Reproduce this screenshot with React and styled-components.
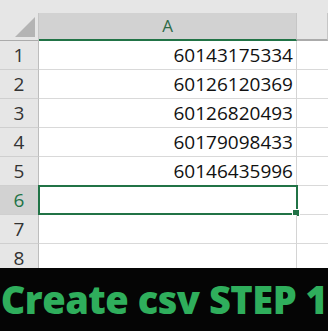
import React from 'react';
import styled, { createGlobalStyle } from 'styled-components';

const GlobalStyle = createGlobalStyle`
  html, body {
    margin: 0;
    padding: 0;
    background: #ffffff;
  }
  body {
    font-family: 'Open Sans', 'Noto Sans', sans-serif;
  }
`;

const Page = styled.div`
  width: 328px;
  height: 331px;
  display: flex;
  flex-direction: column;
  overflow: hidden;
`;

const Sheet = styled.div`
  height: 268px;
  overflow: hidden;
  display: flex;
  flex-direction: column;
`;

const TopStrip = styled.div`
  height: 13px;
  background: #e6e6e6;
  flex: none;
`;

const HeaderRow = styled.div`
  display: grid;
  grid-template-columns: 39px 258px 1fr;
  height: 28px;
  flex: none;
`;

const Corner = styled.div`
  background: #e6e6e6;
  border-right: 1px solid #c6c6c6;
  border-bottom: 1px solid #ababab;
  display: flex;
  align-items: flex-end;
  justify-content: flex-end;
  padding: 0 3px 3px 0;
`;

const ColHeader = styled.div`
  background: ${(p) => (p.$active ? '#d2d2d2' : '#e6e6e6')};
  border-bottom: 2px solid ${(p) => (p.$active ? '#217346' : '#ababab')};
  border-right: 1px solid #c6c6c6;
  color: ${(p) => (p.$active ? '#2e6b47' : '#444')};
  font-size: 17px;
  display: flex;
  align-items: center;
  justify-content: center;
  padding-bottom: 1px;
  box-sizing: border-box;
`;

const Row = styled.div`
  display: grid;
  grid-template-columns: 39px 258px 1fr;
  height: 29px;
  flex: none;
`;

const RowHeader = styled.div`
  background: ${(p) => (p.$active ? '#d2d2d2' : '#e6e6e6')};
  color: ${(p) => (p.$active ? '#217346' : '#333')};
  border-right: 1px solid #bdbdbd;
  border-bottom: 1px solid #cfcfcf;
  font-size: 19px;
  display: flex;
  align-items: center;
  justify-content: center;
  box-sizing: border-box;
`;

const Cell = styled.div`
  position: relative;
  background: #fff;
  border-right: 1px solid #d4d4d4;
  border-bottom: 1px solid #d9d9d9;
  font-size: 19px;
  color: #111;
  display: flex;
  align-items: center;
  justify-content: flex-end;
  padding-right: 3px;
  box-sizing: border-box;
`;

const EmptyCell = styled.div`
  background: #fff;
  border-bottom: 1px solid #d9d9d9;
  box-sizing: border-box;
`;

const Selection = styled.div`
  position: absolute;
  left: -1px;
  top: -1px;
  right: -2px;
  bottom: -1px;
  border: 2px solid #217346;
  pointer-events: none;
`;

const FillHandle = styled.div`
  position: absolute;
  right: -4px;
  bottom: -4px;
  width: 6px;
  height: 6px;
  background: #217346;
  border: 1px solid #fff;
`;

const Banner = styled.div`
  flex: 1;
  background: #050505;
  display: flex;
  align-items: center;
  justify-content: center;
  padding-bottom: 2px;
`;

const BannerText = styled.div`
  font-family: 'Open Sans', 'Noto Sans', sans-serif;
  font-weight: 800;
  font-size: 38px;
  color: #2fae5c;
  white-space: nowrap;
  letter-spacing: -0.5px;
`;

const values = ['60143175334', '60126120369', '60126820493', '60179098433', '60146435996', '', '', ''];

const CornerTriangle = () => (
  <svg width="20" height="20" viewBox="0 0 20 20">
    <polygon points="20,0 20,20 0,20" fill="#b4b4b4" />
  </svg>
);

export default function App() {
  return (
    <Page>
      <GlobalStyle />
      <Sheet>
        <TopStrip />
        <HeaderRow>
          <Corner>
            <CornerTriangle />
          </Corner>
          <ColHeader $active>A</ColHeader>
          <ColHeader />
        </HeaderRow>
        {values.map((v, i) => {
          const active = i === 5;
          return (
            <Row key={i}>
              <RowHeader $active={active}>{i + 1}</RowHeader>
              <Cell>
                {v}
                {active && (
                  <Selection>
                    <FillHandle />
                  </Selection>
                )}
              </Cell>
              <EmptyCell />
            </Row>
          );
        })}
      </Sheet>
      <Banner>
        <BannerText>Create csv STEP 1</BannerText>
      </Banner>
    </Page>
  );
}
